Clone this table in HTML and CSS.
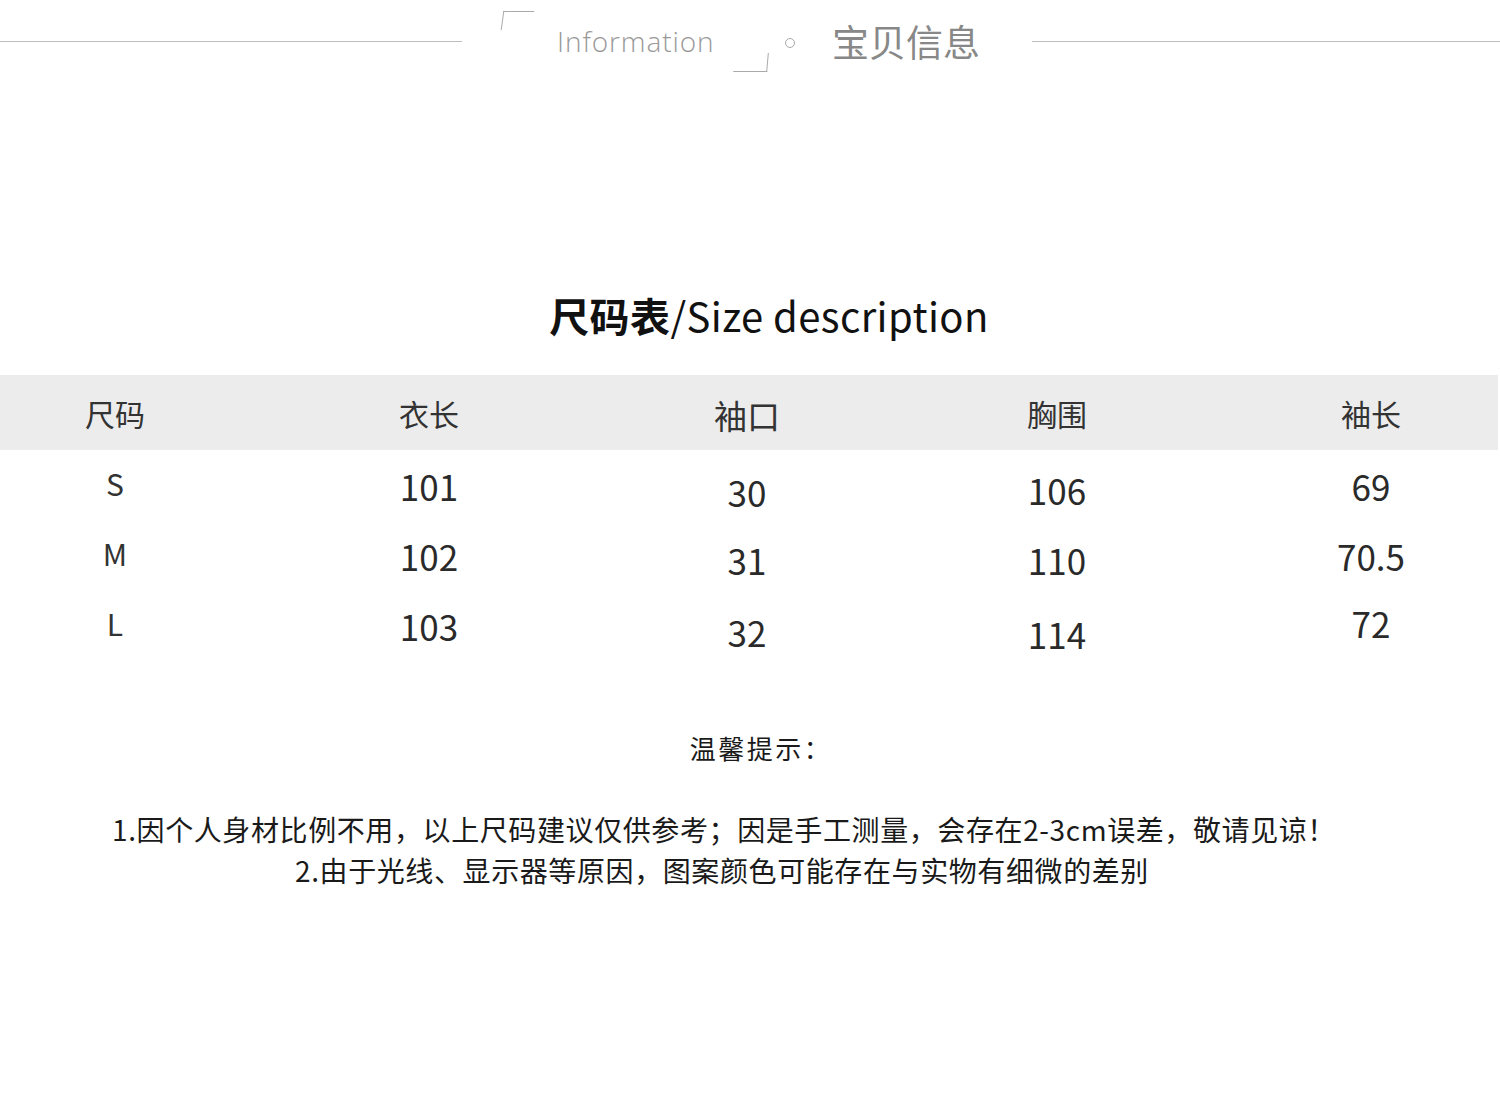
FILE: index.html
```html
<!DOCTYPE html>
<html lang="zh-CN">
<head>
<meta charset="utf-8">
<title>尺码表</title>
<link rel="stylesheet" href="styles.css">
</head>
<body>
<header class="info-head">
  <div class="rule rule-left"></div>
  <div class="head-mid">
    <span class="info-en">Information</span>
    <span class="dot"></span>
    <span class="info-cn">宝贝信息</span>
  </div>
  <div class="rule rule-right"></div>
</header>

<h1 class="title"><b>尺码表</b>/Size description</h1>

<section class="size-table">
  <div class="band">
    <div class="row head">
      <span>尺码</span><span>衣长</span><span class="big c3">袖口</span><span>胸围</span><span>袖长</span>
    </div>
  </div>
  <div class="body">
    <div class="row">
      <span class="sz">S</span><span>101</span><span class="c3 dn">30</span><span class="dn2">106</span><span>69</span>
    </div>
    <div class="row">
      <span class="sz">M</span><span>102</span><span class="c3 dn2">31</span><span class="dn2">110</span><span>70.5</span>
    </div>
    <div class="row">
      <span class="sz">L</span><span>103</span><span class="c3 dn">32</span><span class="dn3">114</span><span class="up">72</span>
    </div>
  </div>
</section>

<section class="notes">
  <p class="notes-title">温馨提示：</p>
  <p class="note n1">1.因个人身材比例不用，以上尺码建议仅供参考；因是手工测量，会存在2-3cm误差，敬请见谅！</p>
  <p class="note n2">2.由于光线、显示器等原因，图案颜色可能存在与实物有细微的差别</p>
</section>
</body>
</html>
```

FILE: styles.css
```css
html, body {
  margin: 0;
  padding: 0;
  background: #ffffff;
}
body {
  width: 1500px;
  overflow: hidden;
  font-family: "Noto Sans CJK SC", "Noto Sans", sans-serif;
  color: #222;
}

/* ---------- header ---------- */
.info-head {
  height: 82px;
  display: flex;
  align-items: center;
}
.rule {
  height: 1px;
  background: #bdbdbd;
}
.rule-left {
  flex: 0 0 462px;
}
.rule-right {
  flex: 1;
}
.head-mid {
  flex: 0 0 570px;
  display: flex;
  align-items: center;
  padding-left: 95px;
  box-sizing: border-box;
}
.info-en {
  position: relative;
  font-family: "Open Sans", "Noto Sans", sans-serif;
  font-weight: 300;
  font-size: 28px;
  color: #999;
  letter-spacing: 0.9px;
  line-height: 40px;
  width: 160px;
}
.info-en::before {
  content: "";
  position: absolute;
  left: -55px;
  top: -10px;
  width: 30px;
  height: 18px;
  border-top: 1px solid #aaa;
  border-left: 1px solid #aaa;
  transform: skewX(-8deg);
}
.info-en::after {
  content: "";
  position: absolute;
  left: 177px;
  top: 32px;
  width: 33px;
  height: 18px;
  border-bottom: 1px solid #aaa;
  border-right: 1px solid #aaa;
  transform: skewX(-5deg);
}
.dot {
  width: 8px;
  height: 8px;
  border: 1px solid #aaa;
  border-radius: 50%;
  margin-left: 68px;
  margin-top: 4px;
}
.info-cn {
  margin-left: 37px;
  font-size: 37px;
  color: #888;
  line-height: 40px;
}

/* ---------- title ---------- */
.title {
  margin: 208px 0 35px;
  height: 50px;
  line-height: 50px;
  text-align: center;
  font-size: 40px;
  font-weight: 400;
  color: #111;
  padding-left: 38px;
  letter-spacing: 0.4px;
}
.title b {
  font-weight: 700;
}

/* ---------- table ---------- */
.band {
  background: #ececec;
  width: 1498px;
}
.row {
  display: grid;
  grid-template-columns: repeat(5, 314px);
  margin-left: -42px;
  width: 1570px;
  justify-items: center;
  align-items: center;
  color: #333;
}
.row .c3 {
  margin-left: 8px;
}
.row.head {
  height: 75px;
  font-size: 30px;
}
.row.head .big {
  font-size: 33px;
  padding-top: 4px;
}
.body .row {
  height: 70px;
  font-size: 35px;
  font-weight: 400;
  color: #2a2a2a;
}
.body .row .sz {
  font-size: 30px;
  color: #333;
  margin-top: -4px;
}
.body .row .dn {
  margin-top: 12px;
}
.body .row .dn2 {
  margin-top: 8px;
}
.body .row .dn3 {
  margin-top: 16px;
}
.body .row .up {
  margin-top: -6px;
}

/* ---------- notes ---------- */
.notes {
  margin-top: 68px;
}
.notes p {
  margin: 0;
  text-align: center;
  color: #1a1a1a;
}
.notes .notes-title {
  font-size: 26px;
  line-height: 40px;
  letter-spacing: 2.5px;
  padding-left: 22px;
}
.notes .note {
  font-size: 28px;
  line-height: 41px;
  letter-spacing: 0.6px;
}
.notes .n1 {
  margin-top: 41px;
  padding-right: 52px;
}
.notes .n2 {
  padding-right: 56px;
}
```
